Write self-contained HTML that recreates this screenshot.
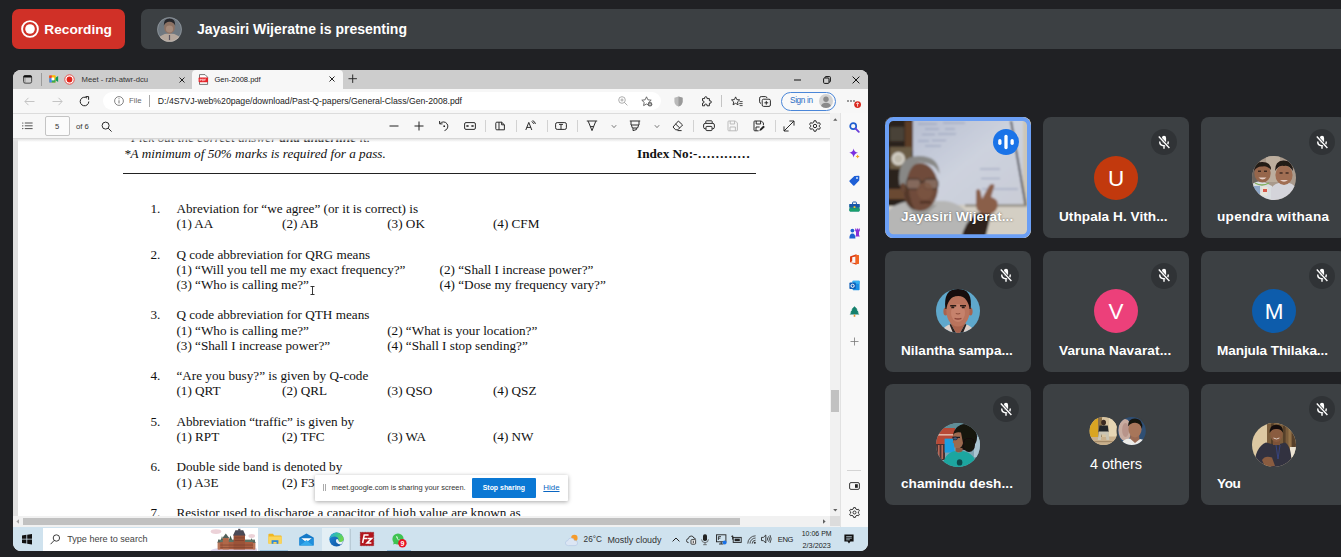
<!DOCTYPE html>
<html>
<head>
<meta charset="utf-8">
<title>Meet</title>
<style>
*{box-sizing:border-box;margin:0;padding:0}
html,body{width:1341px;height:557px;overflow:hidden;background:#202124;font-family:"Liberation Sans",sans-serif;}
.abs{position:absolute}
#stage{position:relative;width:1341px;height:557px;overflow:hidden;background:#202124}
/* top bar */
#rec{left:12px;top:9px;width:113px;height:40px;border-radius:7px;background:#d03027;color:#fff;font-weight:bold;font-size:13.7px}
#rec .t{left:32.3px;top:12.5px;letter-spacing:0px}
#pres{left:141px;top:9px;width:1220px;height:40px;border-radius:7px;background:#3c4043;color:#fff;font-weight:bold;font-size:14px}
#pres .t{left:56px;top:11.8px}
/* window */
#win{left:13px;top:70px;width:855px;height:481px;border-radius:8px;overflow:hidden;background:#fff}
#tabbar{left:0;top:0;width:855px;height:19px;background:#cdcdcd}
#addr{left:0;top:19px;width:855px;height:24px;background:#f7f7f7}
#pdfbar{left:0;top:43px;width:817px;height:26px;background:#f7f7f7;border-top:1px solid #dcdcdc;border-bottom:1px solid #d6d6d6}
#page{left:0;top:69px;width:817px;height:378px;background:#fff;overflow:hidden;font-family:"Liberation Serif",serif;color:#111}
#vscroll{left:817.3px;top:43px;width:10px;height:404px;background:#f1f1f1}
#hscroll{left:0;top:446.4px;width:828px;height:10.6px;background:#f1f1f1}
#side{left:827.3px;top:43px;width:27.7px;height:414px;background:#f8f8f8;border-left:1px solid #e2e2e2}
#task{left:0;top:457px;width:855px;height:24px;background:#cfe2ee}
/* tiles */
.tile{width:146px;height:122px;border-radius:8px;background:#3c4043;overflow:hidden}
.tile .nm{left:16px;color:#fff;font-weight:bold;font-size:13.6px;top:92px;white-space:nowrap;line-height:16px}
.mic{left:108px;top:12px;width:26px;height:26px;border-radius:13px;background:#303336}
.av{left:51px;top:38.7px;width:44px;height:44px;border-radius:22px;overflow:hidden;color:#fff;font-size:22.5px;text-align:center;line-height:45px}

.ic{position:absolute;overflow:visible}
.tx{position:absolute;white-space:nowrap;line-height:1}
.sep{position:absolute;width:1px;background:#d2d2d2}
#page .l{position:absolute;white-space:pre;font-size:13.2px;line-height:15.2px;height:15.2px}
</style>
</head>
<body>
<div id="stage">

<!-- TOP BAR -->
<div id="rec" class="abs"><svg class="ic" style="left:8.2px;top:9.9px" width="20" height="20" viewBox="0 0 20 20"><circle cx="10" cy="10" r="7.9" fill="none" stroke="#fff" stroke-width="1.9"/><circle cx="10" cy="10" r="4.8" fill="#fff"/></svg><span class="abs t">Recording</span></div>
<div id="pres" class="abs"><svg class="ic" style="left:15.5px;top:7.7px" width="25" height="25" viewBox="0 0 25 25"><defs><clipPath id="cpp"><circle cx="12.5" cy="12.5" r="12.3"/></clipPath><filter id="b1"><feGaussianBlur stdDeviation="0.5"/></filter></defs><g clip-path="url(#cpp)"><rect width="25" height="25" fill="#6f7880"/><g filter="url(#b1)"><ellipse cx="12.5" cy="25" rx="12.5" ry="8.5" fill="#b5a79c"/><ellipse cx="12.5" cy="10" rx="5.4" ry="6.8" fill="#8d7264"/><path d="M6.8 8.4 Q6.4 1.4 12.5 1.4 Q18.6 1.4 18.2 8.4 Q16 4.6 12.5 4.8 Q9 4.6 6.8 8.4Z" fill="#26262a"/><rect x="11.9" y="18" width="1.2" height="5" fill="#5a5560"/><ellipse cx="12.5" cy="12" rx="3.6" ry="3.4" fill="#a58a7a"/></g></g><circle cx="12.5" cy="12.5" r="12" fill="none" stroke="#c9ccd0" stroke-width="0.5" opacity="0.6"/></svg><span class="abs t">Jayasiri Wijeratne is presenting</span></div>

<!-- SHARED WINDOW -->
<div id="win" class="abs">
  <div id="tabbar" class="abs">
    <!-- tab actions icon -->
    <svg class="ic" style="left:9.5px;top:4.6px" width="9.2" height="8.8" viewBox="0 0 10 9.4"><rect x="0.6" y="0.8" width="8.8" height="8" rx="1.8" fill="none" stroke="#333" stroke-width="0.95"/><path d="M0.3 2.6 V2 Q0.3 0.3 2 0.3 H8 Q9.7 0.3 9.7 2 V2.6Z" fill="#111"/><line x1="2.2" y1="2.6" x2="2.2" y2="8.6" stroke="#555" stroke-width="0.5"/></svg>
    <div class="sep" style="left:28px;top:3px;height:13px;background:#9b9b9b"></div>
    <!-- meet icon -->
    <svg class="ic" style="left:35.8px;top:5.2px" width="9.4" height="8" viewBox="0 0 10 9"><rect x="0" y="0.5" width="7" height="8" rx="1" fill="#fbbc04"/><rect x="0" y="0.5" width="3" height="3" fill="#ea4335"/><rect x="0" y="3.5" width="3" height="5" fill="#4285f4"/><rect x="3" y="5.5" width="4" height="3" fill="#34a853"/><rect x="3" y="0.5" width="4" height="2.5" fill="#fbbc04"/><rect x="2.6" y="2.8" width="3" height="3.2" fill="#fff"/><path d="M7 3.2 L10 1.2 V7.8 L7 5.8Z" fill="#0f9d58"/></svg>
    <!-- recording dot -->
    <svg class="ic" style="left:51px;top:4px" width="11" height="11" viewBox="0 0 11 11"><circle cx="5.5" cy="5.5" r="4.7" fill="#fff" stroke="#e3413a" stroke-width="0.9"/><circle cx="5.5" cy="5.5" r="2.9" fill="#e3241b"/></svg>
    <span class="tx" style="left:68.5px;top:5.7px;font-size:7.7px;color:#333">Meet - rzh-atwr-dcu</span>
    <svg class="ic" style="left:166px;top:6.5px" width="6" height="6" viewBox="0 0 6 6"><path d="M0.5 0.5 L5.5 5.5 M5.5 0.5 L0.5 5.5" stroke="#222" stroke-width="1"/></svg>
    <!-- active tab -->
    <div class="abs" style="left:178.5px;top:0;width:151px;height:19px;background:#f7f7f7;border-radius:4px 4px 0 0"></div>
    <!-- pdf icon -->
    <svg class="ic" style="left:185px;top:4px" width="11" height="11" viewBox="0 0 11 11"><path d="M1.5 0.6 H7 L9.6 3.2 V10.4 H1.5Z" fill="#fff" stroke="#555" stroke-width="0.8"/><rect x="0.6" y="3.6" width="9.4" height="4.6" rx="0.6" fill="#e5252a"/><path d="M2.2 5 V6.8 M2.2 5.2 H3.4 V6 H2.2 M4.4 5 V6.8 H5.4 V5 H4.4 M6.6 6.8 V5 H7.8 M6.6 5.9 H7.6" fill="none" stroke="#fff" stroke-width="0.55"/></svg>
    <span class="tx" style="left:201.5px;top:5.5px;font-size:7.55px;color:#222">Gen-2008.pdf</span>
    <svg class="ic" style="left:316px;top:6.4px" width="6" height="6" viewBox="0 0 6 6"><path d="M0.5 0.5 L5.5 5.5 M5.5 0.5 L0.5 5.5" stroke="#222" stroke-width="1"/></svg>
    <svg class="ic" style="left:335.2px;top:3.6px" width="9.4" height="9.4" viewBox="0 0 10 10"><path d="M5 0.5 V9.5 M0.5 5 H9.5" stroke="#222" stroke-width="1"/></svg>
    <!-- window controls -->
    <svg class="ic" style="left:781px;top:8.5px" width="7" height="2" viewBox="0 0 7 2"><path d="M0 1 H7" stroke="#111" stroke-width="1.1"/></svg>
    <svg class="ic" style="left:810px;top:5.5px" width="8" height="8" viewBox="0 0 8 8"><rect x="0.6" y="2" width="5.4" height="5.4" rx="1" fill="none" stroke="#111" stroke-width="1"/><path d="M2 2 V1.4 Q2 0.6 2.8 0.6 H6.6 Q7.4 0.6 7.4 1.4 V5.2 Q7.4 6 6.6 6 H6" fill="none" stroke="#111" stroke-width="1"/></svg>
    <svg class="ic" style="left:839px;top:5.5px" width="8" height="8" viewBox="0 0 8 8"><path d="M0.6 0.6 L7.4 7.4 M7.4 0.6 L0.6 7.4" stroke="#111" stroke-width="1"/></svg>
  </div>
  <div id="addr" class="abs">
    <svg class="ic" style="left:11px;top:7.5px" width="11" height="9" viewBox="0 0 11 9"><path d="M10.5 4.5 H1 M4.5 0.8 L0.9 4.5 L4.5 8.2" fill="none" stroke="#c4c4c4" stroke-width="1"/></svg>
    <svg class="ic" style="left:38.5px;top:7.5px" width="11" height="9" viewBox="0 0 11 9"><path d="M0.5 4.5 H10 M6.5 0.8 L10.1 4.5 L6.5 8.2" fill="none" stroke="#c4c4c4" stroke-width="1"/></svg>
    <svg class="ic" style="left:66px;top:6.5px" width="11" height="11" viewBox="0 0 11 11"><path d="M9.8 5.5 A4.3 4.3 0 1 1 8 2" fill="none" stroke="#222" stroke-width="1"/><path d="M6.6 0.6 H9.6 V3.8" fill="none" stroke="#222" stroke-width="1"/></svg>
    <!-- url pill -->
    <div class="abs" style="left:90px;top:3px;width:558px;height:18px;border-radius:9px;background:#fff"></div>
    <svg class="ic" style="left:100.5px;top:7px" width="10" height="10" viewBox="0 0 10 10"><circle cx="5" cy="5" r="4.4" fill="none" stroke="#666" stroke-width="0.8"/><path d="M5 4.3 V7.4" stroke="#666" stroke-width="0.9"/><circle cx="5" cy="2.8" r="0.55" fill="#666"/></svg>
    <span class="tx" style="left:116px;top:8px;font-size:7.8px;color:#666">File</span>
    <div class="sep" style="left:136px;top:6px;height:12px;background:#a8a8a8"></div>
    <span class="tx" style="left:144.8px;top:7.5px;font-size:8.7px;color:#222">D:/4S7VJ-web%20page/download/Past-Q-papers/General-Class/Gen-2008.pdf</span>
    <!-- zoom -->
    <svg class="ic" style="left:605px;top:7px" width="10" height="10" viewBox="0 0 10 10"><circle cx="4" cy="4" r="3.3" fill="none" stroke="#999" stroke-width="0.8"/><path d="M6.4 6.4 L9.4 9.4 M2.4 4 H5.6 M4 2.4 V5.6" stroke="#999" stroke-width="0.8"/></svg>
    <!-- star+ -->
    <svg class="ic" style="left:628px;top:6.5px" width="12" height="11" viewBox="0 0 12 11"><path d="M5.5 0.8 L6.9 3.8 L10.2 4.2 L7.8 6.4 L8.4 9.6 L5.5 8 L2.6 9.6 L3.2 6.4 L0.8 4.2 L4.1 3.8Z" fill="none" stroke="#555" stroke-width="0.85" stroke-linejoin="round"/><circle cx="9" cy="8.3" r="2.3" fill="#666"/><path d="M9 7.2 V9.4 M7.9 8.3 H10.1" stroke="#fff" stroke-width="0.6"/></svg>
    <!-- shield -->
    <svg class="ic" style="left:660.5px;top:6.5px" width="9" height="11" viewBox="0 0 9 11"><path d="M4.5 0.4 L8.6 1.8 V5.4 Q8.6 8.8 4.5 10.6 Q0.4 8.8 0.4 5.4 V1.8Z" fill="#b9b9b9"/><path d="M4.5 0.4 L8.6 1.8 V5.4 Q8.6 8.8 4.5 10.6Z" fill="#9a9a9a"/></svg>
    <!-- puzzle -->
    <svg class="ic" style="left:687.5px;top:6.5px" width="11" height="11" viewBox="0 0 11 11"><path d="M1.5 2.6 H3.6 Q3.2 0.7 4.8 0.7 Q6.4 0.7 6 2.6 H8.4 V4.8 Q10.3 4.4 10.3 6 Q10.3 7.6 8.4 7.2 V9.8 H6 Q6.4 8 4.8 8 Q3.2 8 3.6 9.8 H1.5 V7.2 Q3 7.4 3 6 Q3 4.6 1.5 4.8Z" fill="none" stroke="#222" stroke-width="0.95" stroke-linejoin="round"/></svg>
    <div class="sep" style="left:708px;top:6px;height:12px;background:#c4c4c4"></div>
    <!-- favorites -->
    <svg class="ic" style="left:718px;top:6.5px" width="12" height="11" viewBox="0 0 12 11"><path d="M4.6 0.9 L5.8 3.6 L8.7 3.9 L6.5 5.9 L7.1 8.8 L4.6 7.3 L2.1 8.8 L2.7 5.9 L0.5 3.9 L3.4 3.6Z" fill="none" stroke="#222" stroke-width="0.9" stroke-linejoin="round"/><path d="M8.6 5.6 H11.6 M8.2 7.6 H11.6 M8.6 9.6 H11.6" stroke="#222" stroke-width="0.8"/></svg>
    <!-- collections -->
    <svg class="ic" style="left:745.5px;top:6.5px" width="12" height="11" viewBox="0 0 12 11"><rect x="3.2" y="3.2" width="8.2" height="7.2" rx="1.4" fill="#f7f7f7" stroke="#222" stroke-width="0.95"/><path d="M2 7.4 Q0.6 7.2 0.6 5.8 V2.2 Q0.6 0.6 2.2 0.6 H6.4 Q7.8 0.6 8 2" fill="none" stroke="#222" stroke-width="0.95"/><path d="M5.4 6.8 H9.2 M7.3 4.9 V8.7" stroke="#222" stroke-width="0.95"/></svg>
    <!-- sign in -->
    <div class="abs" style="left:768px;top:2.5px;width:54.5px;height:19px;border-radius:9.5px;border:1px solid #4a86d8;background:#f9f9f9"></div>
    <span class="tx" style="left:777px;top:8px;font-size:8.2px;color:#2b6cc4;letter-spacing:-0.33px">Sign in</span>
    <svg class="ic" style="left:806px;top:5px" width="14" height="14" viewBox="0 0 14 14"><defs><clipPath id="cpa"><circle cx="7" cy="7" r="7"/></clipPath></defs><circle cx="7" cy="7" r="7" fill="#d2d2d2"/><g clip-path="url(#cpa)"><circle cx="7" cy="5.3" r="2.7" fill="#8a8a8a"/><ellipse cx="7" cy="12.4" rx="5" ry="3.6" fill="#8a8a8a"/></g></svg>
    <!-- dots + badge -->
    <svg class="ic" style="left:830px;top:5px" width="20" height="14" viewBox="0 0 20 14"><circle cx="5" cy="7" r="0.8" fill="#222"/><circle cx="8" cy="7" r="0.8" fill="#222"/><circle cx="11" cy="7" r="0.8" fill="#222"/><circle cx="14.6" cy="10.6" r="3.4" fill="#d9281e"/><path d="M14.6 12.6 V8.9 M13.2 10.1 L14.6 8.7 L16 10.1" fill="none" stroke="#fff" stroke-width="0.8"/></svg>
  </div>
  <div id="pdfbar" class="abs">
    <div class="abs" style="left:31.5px;top:2px;width:25.5px;height:20px;border:1px solid #c4c4c4;border-radius:2px;background:#fbfbfb"></div>
    <span class="tx" style="left:42px;top:9px;font-size:7.6px;color:#333">5</span>
    <span class="tx" style="left:63px;top:9px;font-size:7.7px;color:#333">of 6</span>
    <svg class="ic" style="left:8.8px;top:8.3px" width="11" height="8" viewBox="0 0 11 8"><path d="M2.8 1 H10.6 M2.8 3.8 H10.6 M2.8 6.6 H10.6" fill="none" stroke="#2a2a2a" stroke-width="0.8"/><circle cx="0.8" cy="1" r="0.6" fill="#222"/><circle cx="0.8" cy="3.8" r="0.6" fill="#222"/><circle cx="0.8" cy="6.6" r="0.6" fill="#222"/></svg><svg class="ic" style="left:88.1px;top:6.5px" width="11" height="11" viewBox="0 0 11 11"><circle cx="4.6" cy="4.6" r="3.5" fill="none" stroke="#222" stroke-width="0.95"/><path d="M7.2 7.2 L10.6 10.6" fill="none" stroke="#222" stroke-width="0.95"/></svg><svg class="ic" style="left:375.6px;top:6.0px" width="10" height="12" viewBox="0 0 10 12"><path d="M0.5 6 H9.5" stroke="#222" stroke-width="1"/></svg><svg class="ic" style="left:401.0px;top:6.0px" width="10" height="12" viewBox="0 0 10 12"><path d="M0.5 6 H9.5 M5 1.5 V10.5" stroke="#222" stroke-width="1"/></svg><svg class="ic" style="left:425.0px;top:6.0px" width="12" height="12" viewBox="0 0 12 12"><path d="M2 3.6 A4.4 4.4 0 1 1 6.5 10.6" fill="none" stroke="#222" stroke-width="0.95"/><path d="M1.6 1 V3.9 H4.5" fill="none" stroke="#222" stroke-width="0.95"/><circle cx="6.2" cy="6.2" r="0.9" fill="#222"/></svg><svg class="ic" style="left:450.5px;top:6.0px" width="12" height="12" viewBox="0 0 12 12"><rect x="0.6" y="2.6" width="10.8" height="6.8" rx="1.4" fill="none" stroke="#222" stroke-width="0.95"/><path d="M2.6 6 H5 M7 6 H9.4 M3.6 5 L2.6 6 L3.6 7 M8.4 5 L9.4 6 L8.4 7" fill="none" stroke="#222" stroke-width="0.95" stroke-width="0.8"/></svg><svg class="ic" style="left:481.5px;top:6.0px" width="11" height="12" viewBox="0 0 11 12"><path d="M1.8 2.2 H6.6 L9.4 4.8 V9.8 H1.8 Q0.8 9.8 0.8 8.8 V3.2 Q0.8 2.2 1.8 2.2Z" fill="none" stroke="#222" stroke-width="0.95"/><path d="M4 2.2 V9.8 M6.6 2.2 V4.8 H9.4" fill="none" stroke="#222" stroke-width="0.95"/></svg><svg class="ic" style="left:512.0px;top:6.0px" width="12" height="12" viewBox="0 0 12 12"><path d="M0.8 10 L3.8 2.4 L6.8 10 M1.8 7.4 H5.8" fill="none" stroke="#222" stroke-width="0.95"/><path d="M6.6 1.6 Q8.2 2.2 8.6 3.8 M7.6 0.6 Q10 1.4 10.4 4" fill="none" stroke="#222" stroke-width="0.95" stroke-width="0.8"/></svg><svg class="ic" style="left:542.3px;top:6.0px" width="12" height="12" viewBox="0 0 12 12"><rect x="0.6" y="2.6" width="10.8" height="6.8" rx="1.6" fill="none" stroke="#222" stroke-width="0.95"/><path d="M4 4.4 H8 M6 4.4 V9.4" fill="none" stroke="#222" stroke-width="0.95"/></svg><svg class="ic" style="left:573.0px;top:6.0px" width="12" height="12" viewBox="0 0 12 12"><path d="M0.8 1 H11.2 M2.2 1.2 L6 10.6 L9.8 1.2 M4.4 6.6 H7.6" fill="none" stroke="#222" stroke-width="0.95"/></svg><svg class="ic" style="left:597.7px;top:9.5px" width="6" height="5" viewBox="0 0 6 5"><path d="M0.8 1.2 L3 3.6 L5.2 1.2" fill="none" stroke="#555" stroke-width="0.8"/></svg><svg class="ic" style="left:616.3px;top:6.0px" width="12" height="12" viewBox="0 0 12 12"><path d="M0.8 1 H11.2 M2 1.2 V5 H10 V1.2 M2.4 5.2 L3.4 8 H8.6 L9.6 5.2 M4 8.2 V10.6 L7.4 9.6 V8.2" fill="none" stroke="#222" stroke-width="0.95"/></svg><svg class="ic" style="left:640.6px;top:9.5px" width="6" height="5" viewBox="0 0 6 5"><path d="M0.8 1.2 L3 3.6 L5.2 1.2" fill="none" stroke="#555" stroke-width="0.8"/></svg><svg class="ic" style="left:659.0px;top:6.0px" width="12" height="12" viewBox="0 0 12 12"><path d="M6.4 1 L10.6 5 L5.8 9.8 H3.6 L1 7 Z M3.6 4 L7.8 8" fill="none" stroke="#222" stroke-width="0.95" stroke-linejoin="round"/><path d="M5.5 10.6 H9.6" fill="none" stroke="#222" stroke-width="0.95" stroke-width="0.7"/></svg><svg class="ic" style="left:689.6px;top:6.0px" width="12" height="12" viewBox="0 0 12 12"><path d="M2.8 3.4 V1.6 Q2.8 0.8 3.6 0.8 H8.4 Q9.2 0.8 9.2 1.6 V3.4" fill="none" stroke="#222" stroke-width="0.95"/><rect x="0.6" y="3.4" width="10.8" height="5.4" rx="1.6" fill="none" stroke="#222" stroke-width="0.95" stroke-width="1.3"/><rect x="3" y="6.4" width="6" height="4.2" rx="0.8" fill="#f7f7f7" stroke="#222" stroke-width="0.95"/></svg><svg class="ic" style="left:714.3px;top:6.0px" width="12" height="12" viewBox="0 0 12 12"><path d="M1.8 1 H8.4 L10.4 3 V10 Q10.4 10.8 9.6 10.8 H1.8 Q1 10.8 1 10 V1.8 Q1 1 1.8 1Z" fill="none" stroke="#b8b8b8" stroke-width="0.95"/><path d="M3.2 1 V4 H7.6 V1 M3 10.8 V7 H8.4 V10.8" fill="none" stroke="#b8b8b8" stroke-width="0.95"/></svg><svg class="ic" style="left:739.5px;top:6.0px" width="12.5" height="12" viewBox="0 0 12.5 12"><path d="M5.6 10.8 H1.8 Q1 10.8 1 10 V1.8 Q1 1 1.8 1 H8.4 L10.4 3 V5" fill="none" stroke="#222" stroke-width="0.95"/><path d="M3.2 1 V4 H7.6 V1 M3 10.8 V7 H6.6" fill="none" stroke="#222" stroke-width="0.95"/><path d="M6.4 10.9 L7 8.9 L10.4 5.5 L11.8 6.9 L8.4 10.3Z" fill="#222"/></svg><svg class="ic" style="left:770.4px;top:6.0px" width="12" height="12" viewBox="0 0 12 12"><path d="M1 11 L11 1 M6.4 1 H11 V5.6 M1 6.4 V11 H5.6" fill="none" stroke="#222" stroke-width="0.95"/></svg><svg class="ic" style="left:795.6px;top:6.0px" width="12" height="12" viewBox="0 0 12 12"><circle cx="6" cy="6" r="1.7" fill="none" stroke="#222" stroke-width="0.95"/><path d="M5 0.8 H7 L7.4 2.4 L8.8 3.2 L10.4 2.7 L11.4 4.4 L10.2 5.5 V6.5 L11.4 7.6 L10.4 9.3 L8.8 8.8 L7.4 9.6 L7 11.2 H5 L4.6 9.6 L3.2 8.8 L1.6 9.3 L0.6 7.6 L1.8 6.5 V5.5 L0.6 4.4 L1.6 2.7 L3.2 3.2 L4.6 2.4Z" fill="none" stroke="#222" stroke-width="0.95" stroke-linejoin="round"/></svg>
    <div class="sep" style="left:471.5px;top:6px;height:12px"></div><div class="sep" style="left:502.5px;top:6px;height:12px"></div><div class="sep" style="left:533.6px;top:6px;height:12px"></div><div class="sep" style="left:564.0px;top:6px;height:12px"></div><div class="sep" style="left:680.4px;top:6px;height:12px"></div><div class="sep" style="left:761.5px;top:6px;height:12px"></div>
  </div>
  <div id="page" class="abs"><div class="l" style="left:118.0px;top:-9.45px;font-size:13.2px"><i>Pick out the correct answer <b>and underline</b> it.</i></div>
<div class="l" style="left:111.0px;top:6.75px;"><i>*A minimum of 50% marks is required for a pass.</i></div>
<div class="l" style="left:624.0px;top:6.75px;"><b>Index No:-…………</b></div>
<div class="abs" style="left:110px;top:33.6px;width:633px;height:1.6px;background:#222"></div>
<div class="l" style="left:137.5px;top:61.95px;">1.</div>
<div class="l" style="left:163.4px;top:61.95px;">Abreviation for “we agree” (or it is correct) is</div>
<div class="l" style="left:137.5px;top:107.55px;">2.</div>
<div class="l" style="left:163.4px;top:107.55px;">Q code abbreviation for QRG means</div>
<div class="l" style="left:137.5px;top:168.35px;">3.</div>
<div class="l" style="left:163.4px;top:168.35px;">Q code abbreviation for QTH means</div>
<div class="l" style="left:137.5px;top:229.15px;">4.</div>
<div class="l" style="left:163.4px;top:229.15px;">“Are you busy?” is given by Q-code</div>
<div class="l" style="left:137.5px;top:274.75px;">5.</div>
<div class="l" style="left:163.4px;top:274.75px;">Abbreviation “traffic” is given by</div>
<div class="l" style="left:137.5px;top:320.35px;">6.</div>
<div class="l" style="left:163.4px;top:320.35px;">Double side band is denoted by</div>
<div class="l" style="left:137.5px;top:365.95px;">7.</div>
<div class="l" style="left:163.4px;top:365.95px;">Resistor used to discharge a capacitor of high value are known as</div>
<div class="l" style="left:163.4px;top:77.15px;">(1) AA</div>
<div class="l" style="left:269.0px;top:77.15px;">(2) AB</div>
<div class="l" style="left:374.2px;top:77.15px;">(3) OK</div>
<div class="l" style="left:479.9px;top:77.15px;">(4) CFM</div>
<div class="l" style="left:163.4px;top:122.75px;">(1) “Will you tell me my exact frequency?”</div>
<div class="l" style="left:426.6px;top:122.75px;">(2) “Shall I increase power?”</div>
<div class="l" style="left:163.4px;top:137.95px;">(3) “Who is calling me?”</div>
<div class="l" style="left:426.6px;top:137.95px;">(4) “Dose my frequency vary?”</div>
<div class="l" style="left:163.4px;top:183.55px;">(1) “Who is calling me?”</div>
<div class="l" style="left:374.2px;top:183.55px;">(2) “What is your location?”</div>
<div class="l" style="left:163.4px;top:198.75px;">(3) “Shall I increase power?”</div>
<div class="l" style="left:374.2px;top:198.75px;">(4) “Shall I stop sending?”</div>
<div class="l" style="left:163.4px;top:244.35px;">(1) QRT</div>
<div class="l" style="left:269.0px;top:244.35px;">(2) QRL</div>
<div class="l" style="left:374.2px;top:244.35px;">(3) QSO</div>
<div class="l" style="left:479.9px;top:244.35px;">(4) QSZ</div>
<div class="l" style="left:163.4px;top:289.95px;">(1) RPT</div>
<div class="l" style="left:269.0px;top:289.95px;">(2) TFC</div>
<div class="l" style="left:374.2px;top:289.95px;">(3) WA</div>
<div class="l" style="left:479.9px;top:289.95px;">(4) NW</div>
<div class="l" style="left:163.4px;top:335.55px;">(1) A3E</div>
<div class="l" style="left:269.0px;top:335.55px;">(2) F3</div>
<svg class="ic" style="left:296.5px;top:147px" width="5" height="9" viewBox="0 0 5 9"><path d="M0.5 0.5 H4.5 M0.5 8.5 H4.5 M2.5 0.5 V8.5" stroke="#222" stroke-width="0.9" fill="none"/></svg>
<div class="abs" style="left:0;top:0;width:4.5px;height:378px;background:#e0e0e0"></div>
<div class="abs" style="left:0;top:0;width:817px;height:3px;background:linear-gradient(#e4e4e4,rgba(255,255,255,0))"></div>
<div class="abs" style="left:302px;top:335.5px;width:252.5px;height:26.5px;background:#fff;box-shadow:0 1px 4px rgba(0,0,0,0.35);border-radius:1px">
  <div class="abs" style="left:7.5px;top:9.5px;width:1px;height:7px;background:#aaa"></div><div class="abs" style="left:9.5px;top:9.5px;width:1px;height:7px;background:#aaa"></div>
  <span class="tx" style="left:16.7px;top:9.5px;font-size:7.45px;color:#333;font-family:'Liberation Sans',sans-serif">meet.google.com is sharing your screen.</span>
  <div class="abs" style="left:157.3px;top:3.6px;width:63.7px;height:19.6px;background:#0b78d4;border-radius:1px"></div>
  <span class="tx" style="left:167.7px;top:10.6px;font-size:6.95px;font-weight:bold;color:#fff;font-family:'Liberation Sans',sans-serif">Stop sharing</span>
  <span class="tx" style="left:228.3px;top:9.5px;font-size:7.9px;color:#0a66c2;text-decoration:underline;font-family:'Liberation Sans',sans-serif">Hide</span>
</div></div>
  <div id="vscroll" class="abs">
    <svg class="ic" style="left:2.7px;top:5px" width="4.6" height="2.8" viewBox="0 0 6 4"><path d="M0 4 L3 0.5 L6 4Z" fill="#606060"/></svg>
    <div class="abs" style="left:1.2px;top:276.9px;width:7.6px;height:21.8px;background:#c1c1c1"></div>
    <svg class="ic" style="left:2.7px;top:396.3px" width="4.6" height="2.8" viewBox="0 0 6 4"><path d="M0 0 L3 3.5 L6 0Z" fill="#606060"/></svg>
  </div>
  <div id="hscroll" class="abs">
    <svg class="ic" style="left:3px;top:2.7px" width="3" height="4.8" viewBox="0 0 4 6"><path d="M4 0 L0.5 3 L4 6Z" fill="#a3a3a3"/></svg>
    <div class="abs" style="left:10px;top:1.2px;width:717px;height:7.7px;background:#c1c1c1"></div>
    <svg class="ic" style="left:810px;top:2.7px" width="3" height="4.8" viewBox="0 0 4 6"><path d="M0 0 L3.5 3 L0 6Z" fill="#606060"/></svg>
    <div class="abs" style="left:817.3px;top:0;width:10px;height:10px;background:#dcdcdc"></div>
  </div>
  <div id="side" class="abs"><svg class="ic" style="left:8.0px;top:8.5px" width="11" height="11" viewBox="0 0 11 11"><circle cx="4.2" cy="4.2" r="3" fill="none" stroke="#1f5fd0" stroke-width="1.7"/><path d="M6.6 6.6 L9.8 9.8" stroke="#6a3fd8" stroke-width="1.9" stroke-linecap="round"/></svg><svg class="ic" style="left:8.0px;top:35.1px" width="11" height="11" viewBox="0 0 11 11"><path d="M4.6 0.4 Q5.2 4 9 4.8 Q5.2 5.6 4.6 9.4 Q4 5.6 0.2 4.8 Q4 4 4.6 0.4Z" fill="#7a2fe0"/><path d="M8.6 6.6 Q8.9 8.3 10.6 8.6 Q8.9 8.9 8.6 10.6 Q8.3 8.9 6.6 8.6 Q8.3 8.3 8.6 6.6Z" fill="#f5a623"/></svg><svg class="ic" style="left:8.0px;top:61.8px" width="11" height="11" viewBox="0 0 11 11"><path d="M5.4 1 L9.6 0.8 Q10.4 0.8 10.4 1.6 L10.2 5.6 L5.4 10.4 Q4.8 11 4.2 10.4 L0.6 6.8 Q0 6.2 0.6 5.6Z" fill="#1e5fd6"/><circle cx="8" cy="3" r="1" fill="#cfe4ff"/></svg><svg class="ic" style="left:8.0px;top:88.3px" width="11" height="11" viewBox="0 0 11 11"><rect x="0.4" y="3" width="10.2" height="7.4" rx="1" fill="#1c7a8c"/><rect x="0.4" y="3" width="10.2" height="3" fill="#1756a8"/><path d="M3.6 3 V1.6 Q3.6 1 4.2 1 H6.8 Q7.4 1 7.4 1.6 V3" fill="none" stroke="#1756a8" stroke-width="1"/><rect x="4.6" y="5.2" width="1.8" height="1.8" fill="#f0c22b"/><rect x="0.4" y="7.4" width="10.2" height="3" rx="0.8" fill="#19a06a"/></svg><svg class="ic" style="left:8.0px;top:114.5px" width="11" height="11" viewBox="0 0 11 11"><circle cx="3.4" cy="2.6" r="1.9" fill="#1f5fd0"/><path d="M0.4 10.6 Q0.4 5.6 3.4 5.6 Q6.4 5.6 6.4 10.6Z" fill="#1f5fd0"/><path d="M6.2 0.4 H7.2 V1.4 H8 V0.4 H9 V1.4 H9.8 V0.4 H10.8 V3 L10 3.8 V7 L10.8 8.4 H6.2 L7 7 V3.8 L6.2 3Z" fill="#8a2fd8"/></svg><svg class="ic" style="left:8.0px;top:140.8px" width="11" height="11" viewBox="0 0 11 11"><path d="M1 2.6 L6.6 0.4 L10 1.4 V9.6 L6.6 10.6 L1 8.4 L6.6 9 V2.4 L3.2 3.2 V7.2 L1 8.4Z" fill="#dc3e15"/><path d="M6.6 0.4 L10 1.4 V9.6 L6.6 10.6Z" fill="#f26522"/></svg><svg class="ic" style="left:8.0px;top:167.2px" width="11" height="11" viewBox="0 0 11 11"><rect x="3.6" y="0.8" width="7" height="9.4" rx="0.8" fill="#1a8fe3"/><rect x="3.6" y="0.8" width="7" height="3" fill="#35b0f2"/><rect x="0.4" y="2.6" width="6.4" height="6.4" rx="0.8" fill="#0f5fb8"/><circle cx="3.6" cy="5.8" r="1.6" fill="none" stroke="#fff" stroke-width="1"/></svg><svg class="ic" style="left:8.0px;top:193.3px" width="11" height="11" viewBox="0 0 11 11"><path d="M5.5 0.2 L8.6 3.6 H7.6 L9.8 6.4 H8.6 L10.4 8.6 H0.6 L2.4 6.4 H1.2 L3.4 3.6 H2.4Z" fill="#15806c"/><rect x="4.7" y="8.6" width="1.6" height="2.2" fill="#e8912d"/></svg><svg class="ic" style="left:9.0px;top:223.5px" width="9" height="9" viewBox="0 0 9 9"><path d="M4.5 0.5 V8.5 M0.5 4.5 H8.5" stroke="#777" stroke-width="0.8"/></svg><div class="abs" style="left:6px;top:357.0px;width:14px;height:1px;background:#d4d4d4"></div><svg class="ic" style="left:8.0px;top:368.0px" width="11" height="10" viewBox="0 0 11 10"><rect x="0.6" y="1.6" width="9.8" height="6.8" rx="1.4" fill="none" stroke="#222" stroke-width="0.9"/><rect x="6" y="3.2" width="2.8" height="3.6" fill="#222"/></svg><svg class="ic" style="left:8.0px;top:393.5px" width="11" height="11" viewBox="0 0 11 11"><circle cx="5.5" cy="5.5" r="1.5" fill="none" stroke="#222" stroke-width="0.9"/><path d="M4.6 0.6 H6.4 L6.8 2 L8 2.7 L9.5 2.3 L10.4 3.9 L9.3 4.9 V6.1 L10.4 7.1 L9.5 8.7 L8 8.3 L6.8 9 L6.4 10.4 H4.6 L4.2 9 L3 8.3 L1.5 8.7 L0.6 7.1 L1.7 6.1 V4.9 L0.6 3.9 L1.5 2.3 L3 2.7 L4.2 2Z" fill="none" stroke="#222" stroke-width="0.9" stroke-linejoin="round"/></svg></div>
  <div id="task" class="abs"><svg class="ic" style="left:9.0px;top:6.8px" width="10" height="10.4" viewBox="0 0 10 10.4"><path d="M0 1.4 L4.4 0.8 V4.8 H0Z M5.2 0.7 L10 0 V4.8 H5.2Z M0 5.6 H4.4 V9.6 L0 9Z M5.2 5.6 H10 V10.4 L5.2 9.7Z" fill="#111"/></svg><div class="abs" style="left:30px;top:0.6px;width:215px;height:23.4px;background:#fff"></div><svg class="ic" style="left:36.8px;top:7.0px" width="10.4" height="11" viewBox="0 0 10.4 11"><circle cx="6.4" cy="4" r="3.2" fill="none" stroke="#333" stroke-width="0.95"/><path d="M4.2 6.4 L0.6 10.2" stroke="#333" stroke-width="0.95"/></svg><span class="tx" style="left:54.2px;top:7.5px;font-size:9.1px;color:#444">Type here to search</span><svg class="ic" style="left:197px;top:1px" width="47" height="23" viewBox="0 0 47 23"><defs><filter id="b3"><feGaussianBlur stdDeviation="0.35"/></filter></defs><g filter="url(#b3)">
<ellipse cx="6" cy="3.6" rx="5.3" ry="2.4" fill="#ecd2d8"/><ellipse cx="41.7" cy="8" rx="3.3" ry="1.9" fill="#ecd2d8"/>
<path d="M0 23 Q4 19.5 12 20.5 H47 V23Z" fill="#dcd6ee"/>
<path d="M9.5 17 L12 8 L14.6 17Z M38.6 19 L41.6 10 L44.6 19Z M18.5 13 L20.5 7.5 L22.5 13Z" fill="#3f5a48"/>
<rect x="8" y="13.4" width="37" height="8" fill="#a85c40"/>
<rect x="8" y="11.6" width="37" height="2.4" fill="#5c7466"/>
<rect x="12.8" y="9.6" width="6" height="11.8" fill="#b0674a"/>
<path d="M12.4 10 L15.8 5.6 L19.2 10Z" fill="#51615a"/>
<rect x="23.6" y="6.6" width="11.4" height="14.8" fill="#9b5238"/>
<path d="M23 7.4 L25.4 2.2 H33.2 L35.6 7.4Z" fill="#4b4a55"/>
<rect x="28.2" y="0.8" width="2.2" height="2" fill="#4b4a55"/>
<rect x="8" y="16.6" width="37" height="0.9" fill="#7d4330" opacity="0.8"/>
<rect x="8" y="19" width="37" height="0.8" fill="#7d4330" opacity="0.7"/>
<rect x="24.6" y="9.4" width="9.4" height="0.9" fill="#7a3f2c" opacity="0.8"/><rect x="24.6" y="12" width="9.4" height="0.9" fill="#7a3f2c" opacity="0.8"/>
<rect x="7.6" y="14" width="2.6" height="7.4" fill="#b87458"/><rect x="43" y="14.4" width="2.4" height="7" fill="#b87458"/>
<path d="M7.2 14.4 L8.9 11.6 L10.6 14.4Z M42.6 14.8 L44.2 12.2 L45.8 14.8Z" fill="#51615a"/>
</g></svg><svg class="ic" style="left:255.2px;top:6.2px" width="14" height="11.5" viewBox="0 0 14 11.5"><path d="M0.4 1.6 Q0.4 0.8 1.2 0.8 H5 L6.2 2.4 H12.8 Q13.6 2.4 13.6 3.2 V10.4 H0.4Z" fill="#f0b722"/><rect x="0.4" y="3.6" width="13.2" height="7.2" rx="0.6" fill="#fbd55a"/><rect x="3.6" y="7.2" width="6.8" height="3.6" fill="#2f8ad8"/><rect x="5.4" y="9" width="3.2" height="1.8" fill="#fbd55a"/></svg><svg class="ic" style="left:285.5px;top:5.5px" width="15" height="13" viewBox="0 0 15 13"><path d="M0.4 4.6 L7.5 0.4 L14.6 4.6 V12.6 H0.4Z" fill="#1579c8"/><path d="M2.2 5.2 H12.8 L7.5 9.2Z" fill="#fff"/><path d="M0.4 12.6 L7.5 7 L14.6 12.6Z" fill="#32a9ec"/><path d="M0.4 4.8 V12.6 L6 8.4Z" fill="#1f8fdc"/><path d="M14.6 4.8 V12.6 L9 8.4Z" fill="#1f8fdc"/></svg><div class="abs" style="left:308.7px;top:0.6px;width:27.7px;height:23.4px;background:#e3eff5"></div><div class="abs" style="left:336.5px;top:2px;width:1px;height:21px;background:#b9cbd6"></div><svg class="ic" style="left:316.1px;top:4.5px" width="15" height="15" viewBox="0 0 15 15"><defs><linearGradient id="eg" x1="0" y1="0" x2="1" y2="0.4"><stop offset="0" stop-color="#2aa6e8"/><stop offset="0.55" stop-color="#37c39a"/><stop offset="1" stop-color="#6fd84a"/></linearGradient><linearGradient id="eb" x1="0" y1="0" x2="1" y2="1"><stop offset="0" stop-color="#1d86d8"/><stop offset="1" stop-color="#0d4f9e"/></linearGradient></defs>
<circle cx="7.5" cy="7.5" r="7.1" fill="url(#eb)"/>
<path d="M0.5 6.6 A7.1 7.1 0 0 1 14.6 7 Q14.7 10 11.9 10.1 Q9.6 10.1 9.5 8.2 Q9.7 5.4 6.9 4.7 Q3 4.2 0.5 6.6Z" fill="url(#eg)"/>
<path d="M9.5 8.2 Q9.5 10.2 11.9 10.1 Q13.8 10 14.4 8.6 Q14 11 12 12.4 Q9 12.4 7.4 10.4 Q6.4 8.8 7.4 7.2 Q8.6 6.4 9.5 8.2Z" fill="#e6f1f7"/>
</svg><svg class="ic" style="left:347.3px;top:5.0px" width="14" height="14" viewBox="0 0 14 14"><rect x="0.3" y="0.3" width="13.4" height="13.4" fill="#b3151c" stroke="#8c0f14" stroke-width="0.6" stroke-dasharray="1 0.6"/><path d="M2.6 11 L4.2 3 H8.6 M3.6 6.6 H7 M7.4 6.6 H11.6 L7 11 H11.4" fill="none" stroke="#fff" stroke-width="1.5"/></svg><svg class="ic" style="left:379.0px;top:5.5px" width="15" height="15" viewBox="0 0 15 15"><circle cx="6" cy="6" r="5.6" fill="#3fc351"/><path d="M1.2 11.6 L2 8.4 L4.2 10.6Z" fill="#3fc351"/><path d="M4 3.6 Q4.6 6.6 8 8.4 L8.8 7.4 L7.6 6.6 L7 7 Q5.8 6.2 5.4 5 L5.8 4.4 L5 3.2Z" fill="#fff"/><circle cx="10.4" cy="10.2" r="4.2" fill="#e81123"/><text x="10.4" y="12.7" font-family="Liberation Sans" font-weight="bold" font-size="7" fill="#fff" text-anchor="middle">9</text></svg><div class="abs" style="left:247px;top:23px;width:28px;height:1px;background:#9cc4e0"></div><div class="abs" style="left:374px;top:23px;width:24px;height:1px;background:#8fbadb"></div><svg class="ic" style="left:551.5px;top:7.0px" width="13" height="12" viewBox="0 0 13 12"><circle cx="9.4" cy="4" r="3.2" fill="#f59b2a"/><path d="M3.4 11.6 Q0.4 11.6 0.4 9 Q0.4 6.8 2.8 6.6 Q3.4 4 6.2 4 Q8.8 4 9.4 6.4 Q12.6 6.2 12.6 9 Q12.6 11.6 10 11.6Z" fill="#dce6f4" stroke="#a9bfe0" stroke-width="0.5"/></svg><span class="tx" style="left:570.6px;top:9.1px;font-size:8.2px;color:#333">26°C</span><span class="tx" style="left:594.4px;top:8.7px;font-size:8.95px;color:#333">Mostly cloudy</span><svg class="ic" style="left:658.7px;top:9.5px" width="8" height="5.5" viewBox="0 0 8 5.5"><path d="M0.6 4.4 L4 1 L7.4 4.4" fill="none" stroke="#222" stroke-width="1"/></svg><svg class="ic" style="left:672.5px;top:7.5px" width="10.5" height="10" viewBox="0 0 10.5 10"><path d="M2.6 7.6 Q0.5 7.6 0.5 5.6 Q0.5 3.8 2.4 3.6 Q2.8 1 5.2 1 Q7.4 1 7.8 3 Q9.6 3 9.6 4.6" fill="none" stroke="#333" stroke-width="0.95"/><rect x="5" y="4.6" width="4.6" height="4.6" rx="0.8" fill="#eee" stroke="#333" stroke-width="0.9"/><path d="M7.3 5.8 V8" stroke="#333" stroke-width="0.9"/></svg><svg class="ic" style="left:688.4px;top:6.7px" width="8" height="11" viewBox="0 0 8 11"><rect x="2" y="0.3" width="4" height="6.8" rx="1.8" fill="#222"/><path d="M0.6 5.4 Q0.6 8.6 4 8.6 Q7.4 8.6 7.4 5.4 M4 8.6 V10.6 M2.2 10.7 H5.8" fill="none" stroke="#555" stroke-width="0.8"/></svg><svg class="ic" style="left:702.5px;top:6.7px" width="11" height="11" viewBox="0 0 11 11"><rect x="0.5" y="0.8" width="9.4" height="7" fill="none" stroke="#222" stroke-width="0.9"/><path d="M3 10 H7.4 M5.2 7.8 V10" stroke="#222" stroke-width="0.9"/><path d="M2.4 6 V2.6 H5 M2.4 4.2 H4.4" fill="none" stroke="#222" stroke-width="0.8"/><circle cx="8.6" cy="8.4" r="2" fill="#1a73e8"/></svg><svg class="ic" style="left:717.8px;top:8.0px" width="11" height="8.5" viewBox="0 0 11 8.5"><rect x="2.2" y="2.4" width="8" height="5" fill="none" stroke="#222" stroke-width="0.9"/><rect x="3.6" y="3.6" width="5.2" height="2.6" fill="#222"/><path d="M0.2 1.2 L2.6 2.2 M1.6 0.4 V4.6" stroke="#222" stroke-width="0.9"/></svg><svg class="ic" style="left:733.9px;top:7.9px" width="9.5" height="9.5" viewBox="0 0 9.5 9.5"><path d="M0.8 8.6 A7.8 7.8 0 0 1 8.6 0.8 M3 8.6 A5.6 5.6 0 0 1 8.6 3 M5.2 8.6 A3.4 3.4 0 0 1 8.6 5.2" fill="none" stroke="#333" stroke-width="0.85"/><circle cx="7.8" cy="7.8" r="1" fill="#333"/></svg><svg class="ic" style="left:748.0px;top:7.4px" width="11" height="10" viewBox="0 0 11 10"><path d="M0.5 3.4 H2.4 L4.8 1 V9 L2.4 6.6 H0.5Z" fill="none" stroke="#222" stroke-width="0.85" stroke-linejoin="round"/><path d="M6.2 3.4 Q7.2 5 6.2 6.6 M7.6 2.2 Q9.4 5 7.6 7.8 M9 1 Q11.4 5 9 9" fill="none" stroke="#222" stroke-width="0.75"/></svg><span class="tx" style="left:764.8px;top:8.6px;font-size:7.6px;color:#222;letter-spacing:-0.45px">ENG</span><span class="tx" style="left:788.7px;top:3.3px;font-size:7px;color:#222">10:06 PM</span><span class="tx" style="left:789.5px;top:14.6px;font-size:7.3px;color:#222">2/3/2023</span><svg class="ic" style="left:831.0px;top:7.2px" width="10" height="10" viewBox="0 0 10 10"><path d="M0.4 0.4 H9.6 V7.6 H6.4 L5 9.4 L3.6 7.6 H0.4Z" fill="#111"/><path d="M2.2 2.6 H7.8 M2.2 4.2 H7.8 M2.2 5.8 H5.8" stroke="#cfe2ee" stroke-width="0.7"/></svg></div>
</div>

<!-- TILES -->
<div id="tiles">
<div class="abs tile" style="left:885px;top:117px;height:121.3px"><svg class="ic" style="left:0;top:0" width="146" height="122" viewBox="0 0 146 122"><defs><filter id="bl" x="-10%" y="-10%" width="120%" height="120%"><feGaussianBlur stdDeviation="0.7"/></filter><filter id="b2" x="-10%" y="-10%" width="120%" height="120%"><feGaussianBlur stdDeviation="1"/></filter><linearGradient id="wb" x1="0" y1="0" x2="1" y2="1"><stop offset="0" stop-color="#b7bed0"/><stop offset="0.5" stop-color="#cdd2de"/><stop offset="1" stop-color="#c9ccd6"/></linearGradient></defs>
<rect width="146" height="122" fill="#cfc9bc"/>
<g filter="url(#b2)">
<rect x="28" y="2" width="110" height="86" fill="url(#wb)"/>
<rect x="138" y="0" width="8" height="122" fill="#cdc6b8"/>
<rect x="0" y="0" width="28" height="94" fill="#2b241f"/>
<rect x="20" y="4" width="8" height="30" fill="#5b3d28"/>
<rect x="5" y="10" width="14" height="14" fill="#4a4238"/>
<rect x="5" y="30" width="22" height="22" fill="#6b5b44"/>
<circle cx="13.3" cy="41.8" r="6.7" fill="#d6d2c8"/><circle cx="13.3" cy="41.8" r="4.2" fill="#bdb8aa"/>
<rect x="3" y="72" width="22" height="10" fill="#6a4a30"/>
<path d="M126 4 Q134 50 140.6 88" fill="none" stroke="#34343e" stroke-width="1.7"/>
<rect x="0" y="89" width="146" height="33" fill="#d4cfc4"/>
<rect x="80" y="87.4" width="62" height="2.2" fill="#8f8a80"/>
<g stroke="#8791b0" stroke-width="0.9" fill="none" opacity="0.85"><path d="M33 7 H52 M58 6 H80"/><path d="M40 12 H54 M60 12 H70"/><path d="M37 17.5 H50 M53 17 H71"/><path d="M33 24 H44 M47 23.5 H61"/><path d="M40 29 H56"/><path d="M95 52 H115"/><path d="M96 61.5 H115"/><path d="M97 72 H133"/></g>
<path d="M0 122 V98 Q8 86 24 84 L60 84 Q78 86 88 104 L90 122Z" fill="#b6b6b5"/>
<path d="M20 86 L34 104 L52 88Z" fill="#9c9c9a"/>
<ellipse cx="35" cy="70" rx="18" ry="24" fill="#6f4c3a"/>
<path d="M17 60 Q18 90 30 93 Q22 80 24 60Z" fill="#543829"/>
<path d="M14.5 68 Q11 39 34 39 Q54 39 54.5 57 Q50 46 36 45.5 Q24 45.5 21 68Z" fill="#888886"/>
<ellipse cx="18" cy="71" rx="2.6" ry="5" fill="#684634"/>
<rect x="21.5" y="62" width="14" height="10" rx="3" fill="#84695c" stroke="#3a2e28" stroke-width="1"/><rect x="39" y="62" width="14" height="10" rx="3" fill="#84695c" stroke="#3a2e28" stroke-width="1"/>
<path d="M35.5 65 H39" stroke="#2e2622" stroke-width="1.2"/>
<path d="M35 85.5 Q40 84.5 46 85.5" stroke="#4a2c22" stroke-width="1.8" fill="none"/><ellipse cx="40" cy="74" rx="8" ry="9" fill="#7d5642" opacity="0.7"/>
<path d="M76 122 Q80 104 92 96 L106 96 L104 106 L100 122Z" fill="#2e221c"/>
<path d="M91 74 Q93 70 95.5 74 L97 82 L104 69 Q107 65.5 109.5 68.5 L106 80 Q114 82 112.5 90 Q110 98 100 97.5 Q91.5 96 91 88Z" fill="#8a5e48"/>
</g>
<rect x="2" y="2" width="142" height="117.3" rx="6.5" fill="none" stroke="#6b9ff5" stroke-width="4"/>
<circle cx="121" cy="25" r="13" fill="#1a73e8"/>
<rect x="113.2" y="22" width="3.3" height="6" rx="1.65" fill="#fff"/><rect x="119.35" y="17.8" width="3.3" height="14.4" rx="1.65" fill="#fff"/><rect x="125.5" y="22" width="3.3" height="6" rx="1.65" fill="#fff"/>
</svg><span class="abs nm" style="text-shadow:0 0 2px rgba(0,0,0,.6);letter-spacing:0.07px">Jayasiri Wijerat...</span></div>
<div class="abs tile" style="left:1043px;top:117px;height:121.3px"><div class="abs mic"><svg class="ic" style="left:6px;top:5.5px" width="14" height="15" viewBox="0 0 14 15"><rect x="4.9" y="0.8" width="4.2" height="7.8" rx="2.1" fill="#fff"/><path d="M2.7 6.6 Q2.7 10.8 7 10.8 Q11.3 10.8 11.3 6.6 M7 10.8 V13.8" fill="none" stroke="#fff" stroke-width="1.45"/><path d="M1.2 1.1 L12.8 13.5" stroke="#303336" stroke-width="3"/><path d="M1.8 1.6 L12.4 12.9" stroke="#fff" stroke-width="1.4"/></svg></div><div class="abs av" style="background:#c2390d">U</div><span class="abs nm" style="letter-spacing:0.05px">Uthpala H. Vith...</span></div>
<div class="abs tile" style="left:1201px;top:117px;height:121.3px"><div class="abs mic"><svg class="ic" style="left:6px;top:5.5px" width="14" height="15" viewBox="0 0 14 15"><rect x="4.9" y="0.8" width="4.2" height="7.8" rx="2.1" fill="#fff"/><path d="M2.7 6.6 Q2.7 10.8 7 10.8 Q11.3 10.8 11.3 6.6 M7 10.8 V13.8" fill="none" stroke="#fff" stroke-width="1.45"/><path d="M1.2 1.1 L12.8 13.5" stroke="#303336" stroke-width="3"/><path d="M1.8 1.6 L12.4 12.9" stroke="#fff" stroke-width="1.4"/></svg></div><div class="abs av"><svg width="44" height="44" viewBox="0 0 44 44" style="display:block"><rect width="44" height="44" fill="#a99a8c"/><g filter="url(#bl)"><rect x="14" y="0" width="14" height="26" fill="#bcae9e"/><rect x="0" y="0" width="8" height="30" fill="#6a625c"/>
<path d="M0 44 V28 Q6 24 12 26 L20 30 V44Z" fill="#d9dde0"/><path d="M2 30 H8 V38 H2Z" fill="#8fa8c8"/><path d="M10 30 L16 31 L15 40 L9 39Z" fill="#e8e4d8"/><path d="M3 27 Q10 31 17 27" stroke="#7fae5a" stroke-width="1.3" fill="none"/><rect x="11" y="33" width="4" height="3" fill="#d85a4a"/>
<path d="M19 44 V32 Q24 26 32 27 Q40 26 44 32 V44Z" fill="#d4d4da"/>
<ellipse cx="10.5" cy="17" rx="8.2" ry="9.6" fill="#96664c"/><ellipse cx="32" cy="19" rx="8.6" ry="10" fill="#a06e52"/>
<path d="M2 15 Q2 5.5 10.5 6 Q19 6 19 14 Q15 9.5 10.5 10.5 Q5 10 2 15Z" fill="#241a16"/>
<path d="M23 15 Q23 4 32 4.5 Q41 5 41 15 Q37 9 32 10 Q27 9 23 15Z" fill="#241a16"/>
<path d="M6.5 21.5 Q10.5 25.5 14.5 21.5Z" fill="#e6d0c8"/><path d="M28 24 Q32 27.5 36 24Z" fill="#e6d0c8"/>
<rect x="6" y="14.6" width="3" height="1.2" fill="#2a1c16"/><rect x="12" y="14.6" width="3" height="1.2" fill="#2a1c16"/><rect x="27.6" y="16.4" width="3" height="1.2" fill="#2a1c16"/><rect x="33.6" y="16.4" width="3" height="1.2" fill="#2a1c16"/></g></svg></div><span class="abs nm" style="letter-spacing:0.29px">upendra withana</span></div>
<div class="abs tile" style="left:885px;top:250.5px;height:121.3px"><div class="abs mic"><svg class="ic" style="left:6px;top:5.5px" width="14" height="15" viewBox="0 0 14 15"><rect x="4.9" y="0.8" width="4.2" height="7.8" rx="2.1" fill="#fff"/><path d="M2.7 6.6 Q2.7 10.8 7 10.8 Q11.3 10.8 11.3 6.6 M7 10.8 V13.8" fill="none" stroke="#fff" stroke-width="1.45"/><path d="M1.2 1.1 L12.8 13.5" stroke="#303336" stroke-width="3"/><path d="M1.8 1.6 L12.4 12.9" stroke="#fff" stroke-width="1.4"/></svg></div><div class="abs av"><svg width="44" height="44" viewBox="0 0 44 44" style="display:block"><rect width="44" height="44" fill="#5fa8cc"/><g filter="url(#bl)">
<rect x="14.5" y="30" width="15" height="14" fill="#a9644e"/>
<path d="M5 44 Q8 36.5 15 35 L20 44Z M39 44 Q36 36.5 29 35 L24 44Z" fill="#dccfc8"/>
<path d="M13.5 35.5 L17 44 H20 L15 35Z M30.5 35.5 L27 44 H24 L29 35Z" fill="#2a2220"/>
<ellipse cx="9.6" cy="22.5" rx="2.2" ry="4" fill="#a9644e"/><ellipse cx="34.4" cy="22.5" rx="2.2" ry="4" fill="#a9644e"/>
<path d="M9.4 20 Q7 0 22 -0.5 Q37 0 34.6 20Z" fill="#15110f"/><ellipse cx="22" cy="22" rx="11.6" ry="15.6" fill="#b9735c"/>
<ellipse cx="22" cy="24" rx="7" ry="9" fill="#c98670" opacity="0.8"/>
<path d="M10 17 Q10 3 22 2.5 Q34 3 34 17 Q32 9 27 7.4 Q21 6.4 17 7.8 Q12 9.5 10 17Z" fill="#15110f"/>
<rect x="14.2" y="16" width="6" height="1.5" fill="#2a1a16"/><rect x="24" y="16" width="6" height="1.5" fill="#2a1a16"/>
<ellipse cx="16.8" cy="18.4" rx="1.6" ry="0.9" fill="#2a1a16"/><ellipse cx="27.2" cy="18.4" rx="1.6" ry="0.9" fill="#2a1a16"/>
<path d="M19.8 24.5 Q22 25.5 24.2 24.5" stroke="#8a4a3a" stroke-width="1" fill="none"/>
<path d="M18.6 29.4 Q22 30.6 25.4 29.4" stroke="#8a4438" stroke-width="1.5" fill="none"/>
</g></svg></div><span class="abs nm" style="letter-spacing:0.0px">Nilantha sampa...</span></div>
<div class="abs tile" style="left:1043px;top:250.5px;height:121.3px"><div class="abs mic"><svg class="ic" style="left:6px;top:5.5px" width="14" height="15" viewBox="0 0 14 15"><rect x="4.9" y="0.8" width="4.2" height="7.8" rx="2.1" fill="#fff"/><path d="M2.7 6.6 Q2.7 10.8 7 10.8 Q11.3 10.8 11.3 6.6 M7 10.8 V13.8" fill="none" stroke="#fff" stroke-width="1.45"/><path d="M1.2 1.1 L12.8 13.5" stroke="#303336" stroke-width="3"/><path d="M1.8 1.6 L12.4 12.9" stroke="#fff" stroke-width="1.4"/></svg></div><div class="abs av" style="background:#ec407a">V</div><span class="abs nm" style="letter-spacing:0.12px">Varuna Navarat...</span></div>
<div class="abs tile" style="left:1201px;top:250.5px;height:121.3px"><div class="abs mic"><svg class="ic" style="left:6px;top:5.5px" width="14" height="15" viewBox="0 0 14 15"><rect x="4.9" y="0.8" width="4.2" height="7.8" rx="2.1" fill="#fff"/><path d="M2.7 6.6 Q2.7 10.8 7 10.8 Q11.3 10.8 11.3 6.6 M7 10.8 V13.8" fill="none" stroke="#fff" stroke-width="1.45"/><path d="M1.2 1.1 L12.8 13.5" stroke="#303336" stroke-width="3"/><path d="M1.8 1.6 L12.4 12.9" stroke="#fff" stroke-width="1.4"/></svg></div><div class="abs av" style="background:#0d5cab">M</div><span class="abs nm" style="letter-spacing:-0.09px">Manjula Thilaka...</span></div>
<div class="abs tile" style="left:885px;top:384px;height:121.3px"><div class="abs mic"><svg class="ic" style="left:6px;top:5.5px" width="14" height="15" viewBox="0 0 14 15"><rect x="4.9" y="0.8" width="4.2" height="7.8" rx="2.1" fill="#fff"/><path d="M2.7 6.6 Q2.7 10.8 7 10.8 Q11.3 10.8 11.3 6.6 M7 10.8 V13.8" fill="none" stroke="#fff" stroke-width="1.45"/><path d="M1.2 1.1 L12.8 13.5" stroke="#303336" stroke-width="3"/><path d="M1.8 1.6 L12.4 12.9" stroke="#fff" stroke-width="1.4"/></svg></div><div class="abs av"><svg width="44" height="44" viewBox="0 0 44 44" style="display:block"><rect width="44" height="44" fill="#7fa3b2"/><g filter="url(#bl)">
<rect x="0" y="0" width="44" height="6" fill="#5f8e98"/>
<rect x="0" y="5" width="19" height="18" fill="#b84a34"/><rect x="0" y="11" width="17" height="1.6" fill="#e0b0a0"/>
<rect x="0" y="21" width="9" height="16" fill="#4a3230"/><rect x="2" y="22" width="1.6" height="14" fill="#b86a58"/><rect x="5.4" y="22" width="1.6" height="14" fill="#b86a58"/>
<rect x="8.6" y="15.6" width="10" height="14" fill="#1f9fe0"/>
<rect x="38" y="14" width="6" height="20" fill="#a9c4d0"/>
<ellipse cx="29" cy="14" rx="12" ry="13" fill="#16120f"/>
<ellipse cx="33" cy="22" rx="6" ry="7" fill="#16120f"/>
<path d="M17 12 Q19 8.5 25 9.5 L27 20 Q26 25 22 25.5 L18.4 24.5 L18 20.5 L16.6 19.5 L17.6 17Z" fill="#9c6a50"/>
<rect x="19.5" y="25" width="7" height="4.5" fill="#8a5a44"/>
<path d="M16.4 14.4 H24" stroke="#1a1a22" stroke-width="1.2"/><ellipse cx="19.2" cy="15.4" rx="2.2" ry="1.5" fill="#4a5a78" stroke="#1a1a22" stroke-width="0.6"/>
<path d="M6.5 44 Q8 30 19 28 L22.5 30 L27 28 Q39 30 41.5 44Z" fill="#1fa6a0"/>
<ellipse cx="23.6" cy="39.4" rx="2.8" ry="3.2" fill="#0f4a4c"/>
</g></svg></div><span class="abs nm" style="letter-spacing:0.06px">chamindu desh...</span></div>
<div class="abs tile" style="left:1043px;top:384px;height:121.3px"><svg class="ic" style="left:46px;top:31.5px" width="60" height="30" viewBox="0 0 60 30"><defs><clipPath id="o1"><circle cx="14.6" cy="15" r="14"/></clipPath><clipPath id="o2"><circle cx="42.8" cy="15" r="14"/></clipPath></defs>
<g clip-path="url(#o1)"><rect width="30" height="30" fill="#d8c4a0"/><g filter="url(#bl)"><rect x="0" y="0" width="9" height="30" fill="#d9a520"/><rect x="9" y="0" width="4" height="22" fill="#8a7048"/><rect x="20" y="2" width="7" height="18" fill="#e6d6b4"/><rect x="0" y="21" width="30" height="9" fill="#c9b08c"/><rect x="0" y="25" width="30" height="1.2" fill="#a48a68"/><ellipse cx="14.6" cy="6.6" rx="2.4" ry="2.8" fill="#3a2a22"/><path d="M10.4 9.6 H18.8 L19.6 16 H9.6Z" fill="#24282c"/><path d="M9.8 15.5 H19.4 L20.4 24 H17.4 L16.6 18.5 H12.6 L11.8 24 H8.8Z" fill="#c9c4b4"/></g></g>
<circle cx="42.8" cy="15" r="15.2" fill="#3c4043"/>
<g clip-path="url(#o2)"><rect x="28" width="32" height="30" fill="#2f4f74"/><g filter="url(#bl)"><ellipse cx="36" cy="14" rx="6.6" ry="11" fill="#c8aca0"/><ellipse cx="36.5" cy="14" rx="3.4" ry="7" fill="#b8948a"/><path d="M40.5 30 L41.5 18 H50 L51 30Z" fill="#9a6a52"/><ellipse cx="46" cy="13" rx="6.6" ry="8.4" fill="#a8765a"/><path d="M39 10.5 Q39 2 46.5 2.4 Q54.5 3 53 13 Q51 6.6 46 6.8 Q42 6.6 39 10.5Z" fill="#17120f"/><path d="M31 30 Q33 22.5 41 22.5 L46 27 L51 23 Q58 24 59 30Z" fill="#ecebe8"/></g></g></svg>
<span class="abs" style="left:0;width:146px;text-align:center;top:72px;font-size:14.5px;color:#fff;white-space:nowrap;letter-spacing:-0.05px">4 others</span></div>
<div class="abs tile" style="left:1201px;top:384px;height:121.3px"><div class="abs mic"><svg class="ic" style="left:6px;top:5.5px" width="14" height="15" viewBox="0 0 14 15"><rect x="4.9" y="0.8" width="4.2" height="7.8" rx="2.1" fill="#fff"/><path d="M2.7 6.6 Q2.7 10.8 7 10.8 Q11.3 10.8 11.3 6.6 M7 10.8 V13.8" fill="none" stroke="#fff" stroke-width="1.45"/><path d="M1.2 1.1 L12.8 13.5" stroke="#303336" stroke-width="3"/><path d="M1.8 1.6 L12.4 12.9" stroke="#fff" stroke-width="1.4"/></svg></div><div class="abs av"><svg width="44" height="44" viewBox="0 0 44 44" style="display:block"><rect width="44" height="44" fill="#dcc8a2"/><g filter="url(#bl)">
<rect x="15" y="0" width="29" height="30" fill="#7a5c3a"/><rect x="19" y="0" width="2.6" height="30" fill="#57412a"/><rect x="31" y="0" width="2.6" height="30" fill="#57412a"/><rect x="36.5" y="0" width="2.4" height="30" fill="#94734a"/><rect x="40" y="0" width="4" height="30" fill="#57412a"/>
<rect x="38" y="24" width="6" height="10" fill="#ece4d4"/>
<path d="M2 44 Q3 24 14 19.5 L24 22 L33 19.5 Q40 23 39.5 44Z" fill="#33333f"/>
<rect x="21" y="16" width="7" height="6" fill="#7d5238"/>
<ellipse cx="24.4" cy="11.5" rx="6.2" ry="7.6" fill="#8a5c40"/>
<path d="M17.6 10 Q17.6 1.6 24.4 1.8 Q31.4 1.8 31.2 10 Q29 5.6 24.4 6 Q20 5.6 17.6 10Z" fill="#15110e"/>
<path d="M21.5 15 Q24.4 17 27.4 15" stroke="#e8d8d0" stroke-width="0.9" fill="none"/>
<path d="M24 22 L26 36 L28 22" stroke="#3a4a9a" stroke-width="0.7" fill="none"/>
<path d="M10 37 Q13 32 20 34.5 L23 43 L13 44Z" fill="#8a5c40"/>
</g></svg></div><span class="abs nm" style="letter-spacing:-0.4px">You</span></div>
</div>

</div>
</body>
</html>
